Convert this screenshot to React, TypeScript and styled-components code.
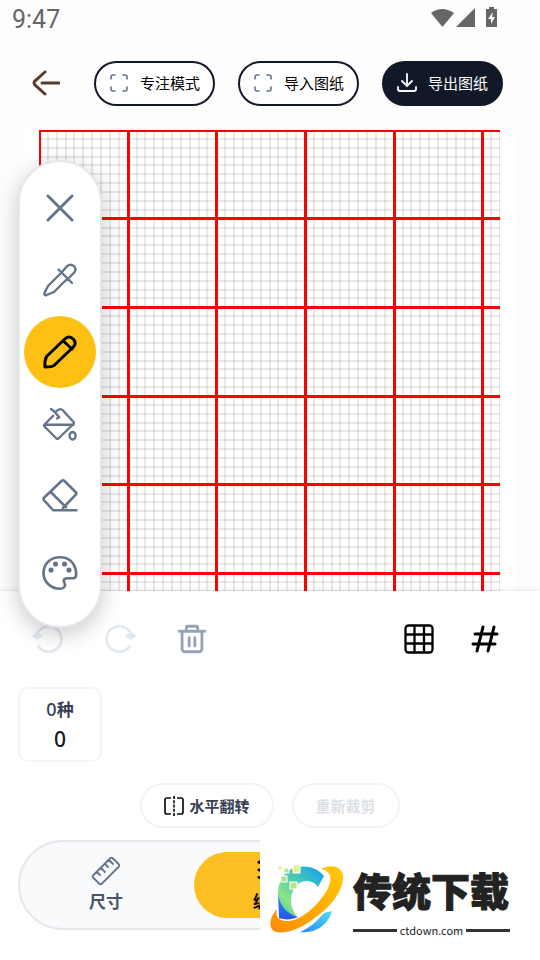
import React from "react";
import styled, { createGlobalStyle, css } from "styled-components";

const GlobalStyle = createGlobalStyle`
  * { box-sizing: border-box; }
  body {
    margin: 0;
    background: #fdfdfd;
    font-family: "Noto Sans", "Noto Sans CJK SC", sans-serif;
    color: #111827;
  }
  button { font: inherit; color: inherit; background: none; border: 0; padding: 0; }
`;

const Page = styled.main`
  position: relative;
  display: flex;
  flex-direction: column;
  min-height: 100vh;
  overflow: hidden;
`;

const StatusBar = styled.div`
  display: flex;
  align-items: center;
  justify-content: space-between;
  height: 40px;
  padding: 0 41px 0 12px;
  color: #666;
  font: 400 25px/40px Roboto, sans-serif;
`;

const StatusIcons = styled.div`
  display: flex;
  align-items: center;
  height: 36px;
  align-self: flex-start;
`;

const Header = styled.header`
  display: flex;
  align-items: center;
  gap: 23px;
  height: 90px;
  padding: 0 37px 4px 32px;
`;

const BackButton = styled.button`
  display: flex;
  width: 28px;
  height: 28px;
  margin-right: auto;
`;

const Pill = styled.button<{ $dark?: boolean }>`
  display: flex;
  align-items: center;
  justify-content: center;
  gap: 11px;
  width: 121px;
  height: 45px;
  border: 2px solid #111827;
  border-radius: 23px;
  background: ${(p) => (p.$dark ? "#111827" : "#fff")};
  color: ${(p) => (p.$dark ? "#fff" : "#000")};
  font: 400 15px/20px "Noto Sans CJK SC", sans-serif;
`;

const Workspace = styled.section`
  flex: 1;
  min-height: 461px;
  display: flex;
  margin: 0 23px;
  padding: 0 17px 0 16px;
  background: #fff;
`;

const Board = styled.svg`
  flex: 1;
  min-width: 0;
  height: 461px;
`;

const Sheet = styled.section`
  padding: 16px 18px 30px;
  background: #fff;
  box-shadow: 0 -1px 4px rgba(0, 0, 0, 0.1);
`;

const ActionRow = styled.div`
  display: flex;
  align-items: center;
  height: 64px;
  padding: 0 20px 0 13px;
`;

const IconButton = styled.button<{ $muted?: boolean }>`
  display: flex;
  align-items: center;
  justify-content: center;
  width: 34px;
  height: 34px;
  color: ${(p) => (p.$muted ? "#e2e8f0" : "#94a3b8")};
`;

const ActionGroup = styled.div<{ $end?: boolean }>`
  display: flex;
  gap: ${(p) => (p.$end ? 32 : 38)}px;
  margin-left: ${(p) => (p.$end ? "auto" : "0")};
`;

const ColorCard = styled.div`
  display: flex;
  flex-direction: column;
  align-items: center;
  width: 84px;
  height: 75px;
  margin-top: 16px;
  padding-top: 6px;
  border: 2px solid #f3f4f6;
  border-radius: 10px;
`;

const ColorKinds = styled.span`
  color: #374151;
  font: 600 17px/28px "Noto Sans CJK SC", sans-serif;
`;

const ColorCount = styled.span`
  font: 500 18px/28px "Noto Sans", sans-serif;
`;

const ColorTotal = styled.span`
  font: 500 21px/32px "Noto Sans", sans-serif;
`;

const EditRow = styled.div`
  display: flex;
  justify-content: center;
  gap: 18px;
  margin-top: 21px;
`;

const OutlineButton = styled.button`
  display: flex;
  align-items: center;
  gap: 5px;
  height: 45px;
  padding: 0 22px;
  border: 2px solid #f3f4f6;
  border-radius: 23px;
  color: #374151;
  font: 600 15px/20px "Noto Sans CJK SC", sans-serif;
  &:disabled { color: #dcdfe4; }
`;

const TabBar = styled.nav`
  display: flex;
  gap: 12px;
  height: 90px;
  margin-top: 12px;
  padding: 10px;
  border: 2px solid #e5e7eb;
  border-radius: 45px;
  background: #f8fafc;
`;

const Tab = styled.button<{ $active?: boolean }>`
  flex: 1;
  display: flex;
  flex-direction: column;
  align-items: center;
  justify-content: center;
  gap: 2px;
  border-radius: 33px;
  color: #475569;
  font: 600 17px/26px "Noto Sans CJK SC", sans-serif;
  ${(p) => p.$active && css`background: #fbbf24; color: #000;`}
`;

const ToolDock = styled.aside`
  position: absolute;
  left: 18px;
  top: 160px;
  display: flex;
  flex-direction: column;
  align-items: center;
  width: 84px;
  padding: 10px 0 17px;
  border: 2px solid #e5e7eb;
  border-radius: 42px;
  background: #fff;
  box-shadow: 0 6px 22px rgba(0, 0, 0, 0.22);
`;

const ToolButton = styled.button<{ $active?: boolean }>`
  display: flex;
  align-items: center;
  justify-content: center;
  width: 72px;
  height: 72px;
  border-radius: 36px;
  color: ${(p) => (p.$active ? "#000" : "#64748b")};
  background: ${(p) => (p.$active ? "#ffc014" : "transparent")};
  &:last-child { margin-top: 5px; }
`;

const Brand = styled.footer`
  position: absolute;
  right: 0;
  bottom: 0;
  display: flex;
  align-items: flex-start;
  gap: 8px;
  width: 280px;
  height: 126px;
  padding: 29px 30px 0 8px;
  background: #fff;
  color: #222;
`;

const BrandText = styled.div`
  flex: 1;
`;

const BrandName = styled.div`
  font: 900 39px/52px "Noto Sans CJK SC", sans-serif;
  -webkit-text-stroke: 1px #222;
  white-space: nowrap;
`;

const BrandSite = styled.div`
  display: flex;
  align-items: center;
  gap: 3px;
  font: 400 11px/16px "Noto Sans CJK SC", sans-serif;
  margin-top: 7px;
  &::before, &::after {
    content: "";
    flex: 1;
    height: 3px;
    background: #333;
  }
`;

type IconProps = { size?: number; width?: number; children: React.ReactNode };
const Icon = ({ size = 36, width = 1.6, children }: IconProps) => (
  <svg width={size} height={size} viewBox="0 0 24 24" fill="none" stroke="currentColor"
    strokeWidth={width} strokeLinecap="round" strokeLinejoin="round" aria-hidden="true">
    {children}
  </svg>
);

const FrameIcon = () => (
  <svg width="20" height="20" viewBox="0 0 20 20" fill="none" stroke="#64748b" strokeWidth="1.6" strokeLinecap="round">
    <path d="M2 6V4a2 2 0 0 1 2-2h2M14 2h2a2 2 0 0 1 2 2v2M18 14v2a2 2 0 0 1-2 2h-2M6 18H4a2 2 0 0 1-2-2v-2" />
  </svg>
);

const PITCH = 8.867;
const steps = Array.from({ length: 53 }, (_, i) => i);

const Grid = () => (
  <Board role="img" aria-label="图纸">
    {steps.filter((i) => i % 10).map((i) => {
      const p = i * PITCH;
      return (
        <g key={i} stroke="#000" strokeOpacity="0.085" strokeWidth="2">
          <line x1={Math.round(p)} x2={Math.round(p)} y1="0" y2="461" />
          <line x1="0" x2="100%" y1={Math.round(p)} y2={Math.round(p)} />
        </g>
      );
    })}
    {steps.filter((i) => i % 10 === 0).map((i) => {
      const x = i === 0 ? 1 : Math.round(i * PITCH) + 0.5;
      const y = i === 0 ? 1 : Math.floor(i * PITCH) + 0.5;
      return (
        <g key={i} stroke="#f00" strokeWidth={i === 0 ? 2 : 3}>
          <line x1={x} x2={x} y1="0" y2="461" />
          <line x1="0" x2="100%" y1={y} y2={y} />
        </g>
      );
    })}
  </Board>
);

const BrandLogo = () => (
  <svg width="77" height="76" viewBox="0 0 77 76" aria-hidden="true">
    <defs>
      <linearGradient id="arc" x1="0.9" y1="0" x2="0.1" y2="1">
        <stop offset="0" stopColor="#12a2ee" />
        <stop offset="0.45" stopColor="#50cdb0" />
        <stop offset="0.75" stopColor="#8ee487" />
        <stop offset="1" stopColor="#49c99c" />
      </linearGradient>
      <linearGradient id="ring" x1="1" y1="0" x2="0" y2="1">
        <stop offset="0" stopColor="#ffca05" />
        <stop offset="1" stopColor="#ff8a00" />
      </linearGradient>
      <linearGradient id="tail" x1="1" y1="0" x2="0" y2="1">
        <stop offset="0" stopColor="#54dcf8" />
        <stop offset="1" stopColor="#2588f2" />
      </linearGradient>
      <linearGradient id="base" x1="0" y1="0" x2="0" y2="1">
        <stop offset="0" stopColor="#2f8df5" />
        <stop offset="1" stopColor="#2456e8" />
      </linearGradient>
    </defs>
    <path d="M56 13C50 5 39 2 30 4C18 6 10 17 10 31C10 41 16 50 29 54C20 41 22 27 31 20C38 16 46 18 50 24Z" fill="url(#arc)" />
    <path d="M10 31C12 43 19 51 30 54C24 57 16 57 11 55Z" fill="url(#base)" />
    <path d="M64 48C61 60 49 71 32 69C42 65 50 57 56 50Z" fill="url(#tail)" />
    <path d="M53 6C63 1 73 3 75 12C76 27 63 43 48 54C33 66 18 71 8 69C-1 66 2 53 9 46C7 54 11 58 20 58C34 57 49 43 58 29C65 17 64 8 53 6Z" fill="url(#ring)" />
    <g stroke="#fff" strokeWidth="1">
      <rect x="10" y="3" width="4" height="4" fill="#e5ef8c" />
      <rect x="16" y="5" width="5" height="5" fill="#b9e982" />
      <rect x="25" y="2" width="7" height="8" fill="#e5ef8c" />
      <rect x="13" y="13" width="6" height="6" fill="#a9e788" />
      <rect x="22" y="19" width="7" height="7" fill="#b4e886" />
    </g>
  </svg>
);

export default function App() {
  return (
    <Page>
      <GlobalStyle />
      <StatusBar>
        <span>9:47</span>
        <StatusIcons>
          <svg width="69" height="24" viewBox="0 0 69 24" fill="#666" aria-hidden="true">
            <path d="M1 7Q12 -1 24 7L12.500 21Z" />
            <path d="M26 21H45V2Z" />
            <path fillRule="evenodd" d="M56 3h3V1h5v2h3v18H56ZM63 6l-5 7h3v5l4-7h-3Z" />
          </svg>
        </StatusIcons>
      </StatusBar>
      <Header>
        <BackButton aria-label="返回">
          <svg width="28" height="28" viewBox="0 0 28 28" fill="none" stroke="#5b3a29" strokeWidth="3" strokeLinecap="round">
            <path d="M27 14H10M13 3L4 11Q0 14 4 17L13 25" />
          </svg>
        </BackButton>
        <Pill><FrameIcon />专注模式</Pill>
        <Pill><FrameIcon />导入图纸</Pill>
        <Pill $dark>
          <svg width="20" height="20" viewBox="0 0 20 20" fill="none" stroke="currentColor" strokeWidth="1.800" strokeLinecap="round">
            <path d="M10 1v12M5 8l5 5 5-5M1 14v2a2 2 0 0 0 2 2h14a2 2 0 0 0 2-2v-2" />
          </svg>
          导出图纸
        </Pill>
      </Header>
      <Workspace><Grid /></Workspace>
      <Sheet>
        <ActionRow>
          <ActionGroup>
            <IconButton $muted disabled aria-label="撤销">
              <Icon size={34} width={1.9}><path d="M5 17A9 9 0 1 0 4 9" /><path d="M1 10l3.500 2L8 9.500 3.500 8Z" fill="currentColor" strokeWidth="1" /></Icon>
            </IconButton>
            <IconButton $muted disabled aria-label="重做">
              <Icon size={34} width={1.9}><path d="M19 17A9 9 0 1 1 20 9" /><path d="M23 10l-3.500 2L16 9.500 20.500 8Z" fill="currentColor" strokeWidth="1" /></Icon>
            </IconButton>
            <IconButton aria-label="清空">
              <Icon size={34} width={2}><path d="M3 6.500h18M5 7v12a2 2 0 0 0 2 2h10a2 2 0 0 0 2-2V7M8 6V4q0-1 1-1h6q1 0 1 1v2M10 11v6M14 11v6" /></Icon>
            </IconButton>
          </ActionGroup>
          <ActionGroup $end>
            <IconButton aria-label="网格">
              <svg width="30" height="30" viewBox="0 0 30 30" fill="none" stroke="#000" strokeWidth="2.300">
                <rect x="1.500" y="1.500" width="27" height="27" rx="3" />
                <path d="M10.500 2v26M20 2v26M2 10.500h26M2 19.500h26" />
              </svg>
            </IconButton>
            <IconButton aria-label="编号">
              <svg width="28" height="28" viewBox="0 0 28 28" fill="none" stroke="#000" strokeWidth="3" strokeLinecap="round">
                <path d="M12 2L6 26M23 2L17 26M4 9h22M2 19h22" />
              </svg>
            </IconButton>
          </ActionGroup>
        </ActionRow>
        <ColorCard>
          <ColorKinds><ColorCount>0</ColorCount>种</ColorKinds>
          <ColorTotal>0</ColorTotal>
        </ColorCard>
        <EditRow>
          <OutlineButton>
            <svg width="20" height="20" viewBox="0 0 20 20" fill="none" stroke="#111" strokeWidth="1.700">
              <path d="M7 2H3Q1 2 1 4v12q0 2 2 2h4M13 2h4q2 0 2 2v12q0 2-2 2h-4" />
              <path d="M10 0v20" strokeDasharray="3 1.250" />
            </svg>
            水平翻转
          </OutlineButton>
          <OutlineButton disabled>重新裁剪</OutlineButton>
        </EditRow>
        <TabBar>
          <Tab>
            <svg width="30" height="30" viewBox="0 0 30 30" fill="none" stroke="#64748b" strokeWidth="1.800" strokeLinejoin="round" strokeLinecap="round">
              <path d="M2.500 19L19 2.500Q20.500 1 22 2.500L27.500 8Q29 9.500 27.500 11L11 27.500Q9.500 29 8 27.500L2.500 22Q1 20.500 2.500 19ZM6 16l3 3M10 12l4 4M14 8l3 3M18 4l4 4" />
            </svg>
            尺寸
          </Tab>
          <Tab $active>
            <Icon size={30} width={2}><path d="M3 5L12 1l9 4-9 4ZM3 11l9 4 9-4M3 17l9 4 9-4" /></Icon>
            编辑
          </Tab>
          <Tab />
        </TabBar>
      </Sheet>
      <ToolDock>
        <ToolButton aria-label="关闭">
          <Icon width={2}><path d="M4 4l16 16M20 4L4 20" /></Icon>
        </ToolButton>
        <ToolButton aria-label="取色">
          <Icon width={1.6}><path d="M13.500 6.500l3-3.500c3-3 7.500.5 5 4L17.500 11M11 5l9 9M12.500 7.500L4 16l-2.500 5q0 1.500 1.500 1l5-2 9-9" /></Icon>
        </ToolButton>
        <ToolButton $active aria-label="画笔">
          <Icon width={2}><path d="M15 3.500q3-3 6 0 2.500 3-.5 5.500L8 21q-1 1-6 1-.5-4 1-7ZM14 4.500l6 5.500" /></Icon>
        </ToolButton>
        <ToolButton aria-label="填充">
          <Icon width={1.6}><path d="M7.500 6.500l-6 6q-.5.700.5 1.500l7.500 7.500q.8.700 1.600 0L21 12q.5-.7 0-1.300L14 3q-2-2-4.500.5M6 2l2 1.500 3.500 4-1.500.8M2 12.500h19" /><ellipse cx="20.400" cy="19.800" rx="2" ry="2.500" /></Icon>
        </ToolButton>
        <ToolButton aria-label="橡皮擦">
          <Icon width={1.7}><path d="M7.500 21.500L1.500 15Q.5 14 1.500 13L13 2q1-1 2 0l7.500 7.500q.8.800 0 1.600L14 20M6 9.500l10 10M7.500 21.500H23" /></Icon>
        </ToolButton>
        <ToolButton aria-label="调色板">
          <Icon width={1.8}>
            <path d="M12 1.500C5.500 1.500 1 6 1 12s5 10.500 11 10.500c3 0 4-2 3-4-1.200-2 0-3 2-3h4c2 0 2-3 1.500-5.500C21 4 17 1.500 12 1.500Z" />
            <g fill="currentColor" strokeWidth="1"><circle cx="6" cy="10" r="1.200" /><circle cx="9" cy="6" r="1.200" /><circle cx="15" cy="6" r="1.200" /><circle cx="18" cy="10" r="1.200" /></g>
          </Icon>
        </ToolButton>
      </ToolDock>
      <Brand>
        <BrandLogo />
        <BrandText>
          <BrandName>传统下载</BrandName>
          <BrandSite>ctdown.com</BrandSite>
        </BrandText>
      </Brand>
    </Page>
  );
}
